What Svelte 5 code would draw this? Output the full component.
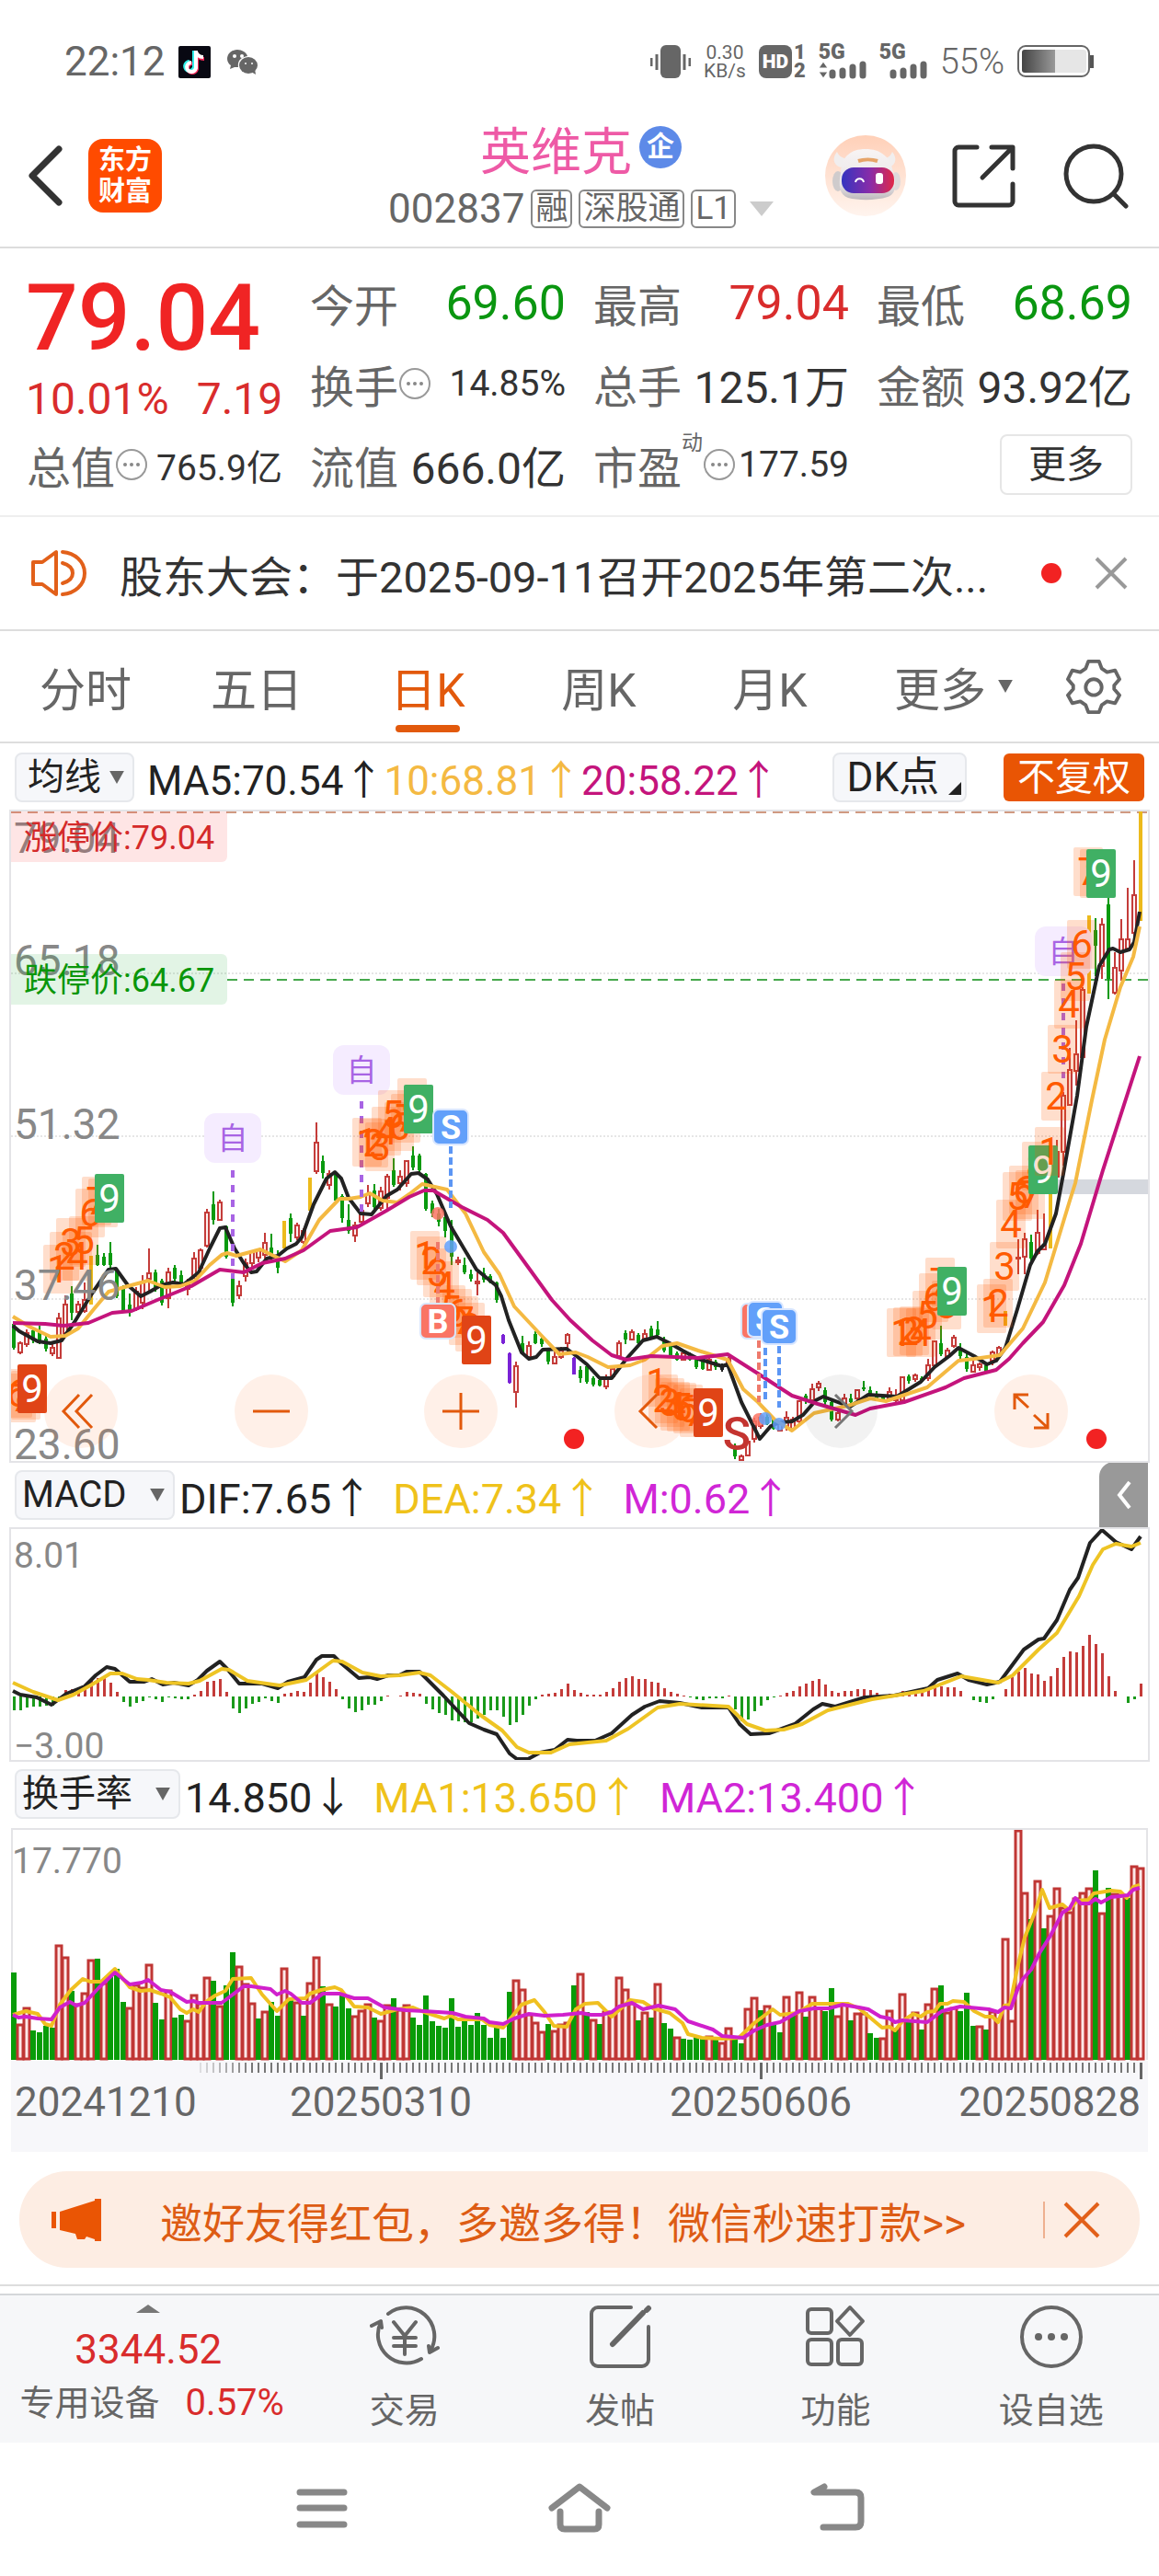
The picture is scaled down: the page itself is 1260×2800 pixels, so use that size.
<script lang="ts">
  type Bar = { kind: string; values: number[]; x: number };

  const WIDTH = 1236;

  const scale = (from: number, to: number, size: number) => (v: number) =>
    Math.round(((v - from) / (to - from)) * size);

  const chartX = scale(30, 3058, WIDTH);
  const priceY = scale(45, 1540, 706);
  const macdX = scale(15, 1553, WIDTH);
  const macdY = scale(212, 966, 251);
  const turnoverY = scale(228, 980, 250);

  const barX = (i: number) => 3 + i * 7;

  function points(data: string, x: (v: number) => number, y: (v: number) => number) {
    return data
      .trim()
      .split(/\s+/)
      .map((pair) => {
        const [a, b] = pair.split(",").map(Number);
        return `${x(a)},${y(b)}`;
      })
      .join(" ");
  }

  function bars(data: string): Bar[] {
    return data
      .trim()
      .split(/\s*;\s*/)
      .map((row, i) => {
        const [kind, ...values] = row.split(" ");
        return { kind, values: values.map(Number), x: barX(i) };
      })
      .filter((bar) => bar.kind !== "-");
  }

  // kind, high, body top, body bottom, low
  const candles = bars(`
    g 1225 1225 1280 1284; r 1265 1270 1290 1295; r 1238 1245 1272 1278; g 1232 1240 1262 1270;
    g 1228 1242 1265 1272; g 1245 1258 1282 1288; r 1270 1280 1292 1298; r 1200 1212 1302 1302;
    r 1158 1180 1245 1250; g 1138 1155 1200 1215; r 1172 1180 1198 1205; r 1130 1170 1195 1200;
    y 1068 1068 1180 1180; g 1043 1065 1090 1092; g 1062 1070 1090 1092; g 1035 1062 1090 1095;
    g 1100 1100 1160 1165; g 1135 1145 1195 1198; g 1155 1180 1200 1207; r 1140 1150 1190 1195;
    r 1112 1130 1175 1190; r 1050 1108 1120 1150; g 1100 1105 1140 1150; g 1120 1125 1175 1182;
    r 1095 1105 1165 1188; g 1090 1095 1120 1130; g 1102 1112 1130 1135; r 1120 1135 1145 1158;
    r 1060 1075 1115 1120; r 1050 1055 1095 1105; r 960 968 1045 1048; g 920 950 985 995;
    r 938 945 985 985; g 998 1000 1070 1075; g 1110 1120 1175 1184; r 1125 1138 1158 1168;
    r 1075 1085 1115 1128; r 1055 1060 1085 1095; r 1050 1055 1072 1082; r 1015 1038 1065 1075;
    g 1018 1048 1075 1080; g 1055 1070 1095 1108; y 988 988 1050 1050; g 970 980 1018 1035;
    r 992 998 1025 1032; r 1005 1010 1035 1040; y 888 888 965 965; r 760 808 872 880;
    g 838 850 878 890; r 870 880 905 915; g 878 880 940 945; g 925 930 980 992;
    g 950 985 1010 1018; r 990 998 1022 1035; r 955 965 990 1000; r 905 925 948 955;
    g 902 918 955 965; r 910 920 958 965; r 880 885 935 960; g 843 870 905 910;
    r 870 885 900 918; r 848 850 900 910; g 815 838 865 870; g 832 838 870 880;
    g 878 880 960 965; g 940 948 970 978; g 960 970 990 1000; g 970 978 1010 1025;
    g 985 1000 1070 1088; r 1070 1078 1082 1088; g 1073 1088 1105 1110; g 1100 1110 1120 1128;
    r 1105 1128 1132 1158; g 1095 1108 1122 1130; g 1110 1115 1130 1132; g 1128 1130 1170 1175;
    p 1248 1250 1270 1272; p 1290 1293 1360 1362; r 1312 1322 1382 1418; g 1252 1268 1290 1295;
    r 1265 1275 1300 1305; g 1242 1248 1270 1272; g 1255 1258 1272 1278; g 1280 1285 1312 1318;
    r 1285 1300 1315 1318; r 1278 1285 1300 1305; r 1245 1250 1270 1290; p 1300 1303 1340 1342;
    g 1322 1330 1350 1360; g 1318 1322 1358 1362; g 1345 1350 1365 1368; g 1350 1353 1366 1368;
    r 1340 1348 1368 1375; r 1320 1328 1345 1350; r 1262 1270 1298 1305; g 1240 1245 1260 1272;
    r 1238 1243 1260 1262; g 1245 1250 1270 1272; r 1238 1248 1258 1265; g 1228 1235 1255 1260;
    g 1218 1238 1250 1255; g 1255 1260 1285 1290; g 1270 1272 1300 1302; g 1288 1293 1308 1310;
    r 1288 1293 1308 1310; g 1290 1295 1308 1310; g 1300 1305 1325 1328; g 1305 1310 1328 1330;
    r 1300 1308 1330 1330; g 1308 1312 1325 1330; k 1315 1320 1330 1335; r 1300 1305 1318 1325;
    g 1500 1510 1530 1535; r 1525 1530 1538 1540; r 1490 1495 1528 1530; r 1440 1450 1490 1498;
    r 1430 1440 1460 1465; g 1430 1438 1455 1458; g 1440 1445 1465 1468; r 1450 1455 1470 1472;
    r 1425 1440 1460 1470; r 1438 1445 1465 1470; r 1400 1402 1450 1455; g 1385 1390 1402 1408;
    r 1362 1375 1400 1405; r 1355 1362 1370 1380; g 1370 1378 1405 1412; g 1395 1405 1445 1448;
    r 1420 1430 1445 1448; r 1385 1395 1415 1418; g 1385 1395 1405 1410; r 1375 1378 1395 1400;
    g 1355 1370 1375 1380; g 1368 1378 1390 1392; g 1380 1385 1395 1398; g 1388 1392 1402 1404;
    r 1370 1382 1398 1400; r 1375 1390 1400 1408; r 1345 1348 1400 1408; g 1342 1345 1355 1362;
    r 1338 1343 1352 1358; g 1345 1350 1358 1360; r 1305 1320 1350 1355; r 1262 1265 1320 1325;
    g 1228 1270 1295 1298; r 1280 1285 1298 1300; r 1250 1257 1275 1280; g 1270 1280 1298 1305;
    g 1290 1300 1328 1335; r 1310 1320 1335 1337; r 1313 1318 1325 1332; g 1315 1320 1335 1336;
    r 1285 1290 1310 1320; r 1275 1280 1295 1305; y 1195 1195 1228 1228; - ;
    r 1030 1072 1075 1110; r 1015 1030 1070 1110; g 1020 1035 1075 1085; r 962 1015 1062 1066;
    r 970 1045 1053 1056; y 925 925 1050 1050; r 800 828 885 888; r 690 700 828 860;
    r 590 640 720 722; r 525 605 642 675; r 450 455 610 615; y 285 285 465 465;
    g 290 318 355 425; r 290 305 400 430; g 245 258 430 478; r 370 405 463 466;
    r 293 340 412 435; r 220 340 360 365; r 158 238 325 350; y 45 45 298 298
  `);

  const ma5 = points(
    `36,1228 53,1242 75,1252 100,1265 135,1270 165,1262 200,1220 245,1155 290,1100 310,1097
    340,1135 375,1162 400,1150 430,1135 460,1129 490,1133 530,1105 560,1050 585,1005 600,1003
    625,1050 650,1085 670,1105 685,1103 710,1075 740,1068 765,1050 790,1040 805,1025 835,950
    870,890 893,876 910,890 930,935 960,970 990,972 1030,930 1060,915 1095,880 1115,877
    1140,892 1165,925 1202,1000 1270,1100 1320,1135 1335,1160 1355,1215 1390,1290 1410,1305
    1430,1300 1445,1284 1510,1282 1539,1300 1564,1318 1599,1350 1629,1350 1669,1305 1714,1262
    1749,1255 1789,1272 1819,1285 1859,1305 1924,1322 1939,1318 1974,1405 2024,1490 2054,1460
    2079,1452 2109,1450 2139,1435 2174,1400 2194,1391 2264,1415 2314,1388 2389,1391 2454,1357
    2489,1325 2529,1298 2554,1280 2594,1298 2629,1317 2654,1310 2679,1280 2709,1190 2744,1090
    2764,1058 2784,1040 2814,970 2832,880 2869,700 2894,540 2929,400 2954,362 2964,360
    2984,368 3009,362 3021,345 3036,275`,
    chartX,
    priceY,
  );

  const ma10 = points(
    `36,1208 80,1230 135,1255 175,1252 210,1235 250,1190 290,1150 340,1138 395,1125 440,1140
    480,1138 520,1125 560,1090 590,1065 605,1062 630,1068 695,1053 760,1080 805,1055 850,985
    905,937 930,937 960,932 985,923 1020,940 1060,945 1090,925 1125,902 1190,915 1240,970
    1290,1060 1330,1110 1370,1185 1440,1250 1490,1295 1535,1290 1565,1300 1619,1325 1679,1320
    1719,1308 1764,1275 1804,1268 1859,1285 1939,1308 1979,1375 2019,1405 2064,1445 2109,1470
    2169,1430 2259,1412 2319,1395 2359,1402 2469,1370 2554,1310 2594,1305 2664,1297 2724,1235
    2784,1130 2849,940 2864,900 2909,710 2944,570 2984,450 3019,380 3036,310`,
    chartX,
    priceY,
  );

  const ma20 = points(
    `36,1222 120,1225 170,1228 235,1222 300,1200 350,1195 420,1170 510,1138 585,1100 650,1105
    700,1085 760,1075 810,1055 880,1010 950,1003 1030,965 1090,932 1130,917 1155,917 1230,955
    1300,985 1340,1015 1400,1085 1470,1170 1520,1217 1579,1262 1629,1297 1669,1308 1734,1298
    1859,1302 1939,1295 2019,1338 2109,1390 2179,1408 2279,1435 2319,1420 2409,1405 2519,1370
    2569,1350 2654,1330 2689,1305 2724,1270 2779,1220 2834,1135 2879,1040 2939,870 3036,608`,
    chartX,
    priceY,
  );

  // nine-count marks: digit, x, y; a nine closes a run
  const marks = `
    6,46,1383 7,57,1394 8,70,1388 9b,86,1372
    1,155,1098 2,172,1068 3,189,1035 4,206,1068 5,223,1032 6,240,968 7,257,940 8,274,945 9s,291,935
    1,978,806 2,995,808 3,1013,815 4,1030,780 5,1047,742 6,1064,770 7,1081,750 8,1098,714 9s,1115,730
    1,1132,1065 2,1150,1078 3,1167,1105 4,1184,1135 5,1202,1190 6,1219,1200 7,1236,1215 8,1253,1230 9b,1269,1260
    1,1749,1358 2,1766,1395 3,1783,1405 4,1800,1412 5,1817,1415 6,1834,1420 7,1851,1428 9b,1886,1428
    1,2401,1243 2,2418,1242 3,2435,1240 4,2452,1243 5,2469,1203 6,2486,1163 7,2504,1127 8,2521,1180 9s,2537,1149
    1,2641,1188 2,2658,1175 3,2675,1091 4,2692,993 5,2709,931 6,2727,915 7,2744,925 8,2761,860 9s,2778,869
    1,2795,826 2,2812,700 3,2830,591 4,2847,488 5,2864,425 6,2881,349 7,2898,182 8,2915,186 9s,2933,187`
    .trim()
    .split(/\s+/)
    .map((mark) => {
      const [text, x, y] = mark.split(",");
      return {
        digit: text[0],
        kind: text[1] === "b" ? "buy" : text[1] === "s" ? "sell" : "count",
        x: chartX(Number(x)),
        y: priceY(Number(y)),
      };
    });

  const watches = [
    { x: 621, y: 797, from: 870, to: 1120 },
    { x: 963, y: 640, from: 713, to: 968 },
    { x: 2832, y: 366, from: 440, to: 660 },
  ];

  const trades = [
    { side: "S", x: 1200, y: 771, from: 815, to: 958, dot: 1047 },
    { side: "B", x: 1166, y: 1218, from: 1035, to: 1180, dot: 970 },
    { side: "B", x: 2022, y: 1218, from: 1262, to: 1405, dot: 1445 },
    { side: "S", x: 2040, y: 1213, from: 1280, to: 1400, dot: 1442 },
    { side: "S", x: 2075, y: 1231, from: 1275, to: 1418, dot: 1455 },
  ];

  const priceLabels = [
    { text: "79.04", y: 45 },
    { text: "65.18", y: 178 },
    { text: "51.32", y: 356 },
    { text: "37.46", y: 531 },
    { text: "23.60", y: 704 },
  ];

  const macdBars = `803 803 795 792 792 788 788 765 738 735 738 728 699 700 700 714 743 776 792 780 773
    762 768 776 762 766 768 768 753 741 711 709 702 743 797 812 797 783 776 764 774 780 750 746 741
    743 713 682 696 710 735 768 797 810 804 786 786 774 757 759 755 743 747 751 783 800 812 819 837
    840 843 843 830 819 804 804 825 851 843 819 789 768 753 750 747 735 717 738 747 753 753 753 744
    732 711 699 693 702 702 711 714 732 744 750 756 762 768 770 766 766 766 756 800 840 833 807 788
    771 762 756 747 741 726 717 708 702 720 741 747 741 741 735 735 738 747 752 750 752 741 741 743
    735 733 720 725 729 729 741 760 770 776 780 767 760 735 696 678 666 684 687 708 693 666 630 612
    615 594 558 588 618 693 741 759 780 767 717`
    .split(/\s+/)
    .map(Number);

  const zero = macdY(759);

  const dif = points(
    `18,740 28,752 50,762 70,785 90,750 115,725 130,690 145,664 155,668 175,710 195,711 205,703
    220,720 235,713 255,722 268,705 280,675 297,645 307,670 323,718 355,718 376,732 390,710
    412,697 428,640 436,626 452,626 462,650 485,698 500,697 510,702 525,690 540,690 550,677
    568,677 600,755 635,845 655,868 672,882 690,945 700,963 714,963 730,942 750,932 768,900
    780,903 805,903 828,880 855,818 872,792 892,775 920,779 950,795 985,795 1000,850 1015,883
    1040,878 1075,850 1100,800 1112,782 1130,793 1170,762 1210,757 1255,733 1268,705 1295,685
    1310,705 1335,720 1353,712 1385,605 1405,572 1413,568 1430,510 1447,410 1458,370 1474,258
    1491,215 1510,255 1530,278 1543,237`,
    macdX,
    macdY,
  );

  const dea = points(
    `18,714 45,745 78,770 100,752 125,720 150,683 165,685 185,703 200,705 225,713 255,716 270,708
    300,668 310,672 335,707 378,722 415,705 450,643 463,645 490,680 515,693 540,690 568,682
    582,690 610,740 650,820 680,870 700,925 715,943 745,942 770,915 820,903 850,865 890,795
    920,782 985,793 1010,850 1035,870 1060,868 1085,850 1120,803 1180,767 1250,740 1300,693
    1350,715 1370,690 1405,605 1430,550 1460,430 1478,330 1492,278 1510,260 1530,268 1543,258`,
    macdX,
    macdY,
  );

  const turnover = bars(`
    g 693;r 862;r 808;g 885;g 890;g 868;g 876;r 603;r 643;g 755;r 797;r 760;r 652;g 648;r 728;g 700;
    g 682;g 790;r 808;r 732;r 742;r 667;g 795;g 848;r 752;g 843;g 833;r 850;r 767;r 795;r 710;g 720;
    r 803;g 735;g 627;r 673;r 730;r 795;g 846;r 822;g 790;g 837;r 680;g 785;r 790;g 837;r 728;r 643;
    g 738;r 797;g 805;g 770;g 812;r 835;r 817;r 797;g 843;r 852;r 800;g 778;r 815;r 800;g 843;g 867;
    g 768;g 855;g 870;g 876;g 777;g 873;g 852;g 867;g 828;g 865;g 909;g 876;g 909;g 756;r 718;r 748;
    r 830;r 857;r 887;g 864;r 885;r 863;r 857;g 735;r 697;g 825;r 848;g 862;r 820;r 825;r 710;r 748;
    r 795;g 850;r 823;g 843;r 730;g 861;g 879;r 905;g 912;g 915;g 905;g 909;r 902;g 912;r 922;r 875;
    g 909;g 927;r 812;r 775;g 819;r 802;g 865;g 891;r 772;g 832;r 758;g 840;r 772;r 808;g 822;g 744;
    r 835;r 795;g 850;r 827;r 827;g 894;g 909;r 908;r 818;g 880;r 764;g 850;r 823;g 882;r 797;r 745;
    g 735;r 825;r 808;g 822;g 759;g 870;r 868;g 880;r 820;r 845;r 583;r 850;r 228;r 433;g 520;r 394;
    g 549;r 508;r 419;r 480;r 495;r 450;r 433;r 419;g 360;r 500;g 417;r 435;r 440;g 450;r 346;r 352
  `);

  const turnoverMa1 = points(
    `36,832 70,820 100,830 120,862 138,868 160,800 190,750 222,716 240,725 270,725 308,683
    345,742 375,755 400,752 430,762 455,775 480,815 498,828 515,815 530,823 550,790 575,768
    600,755 620,715 670,713 700,765 738,820 770,780 815,778 825,762 855,750 893,743 910,752
    945,805 980,808 1015,830 1060,815 1100,808 1130,825 1185,845 1200,835 1220,848 1285,848
    1305,865 1340,875 1390,800 1423,785 1450,825 1475,868 1510,873 1535,815 1559,797 1594,794
    1629,840 1679,785 1714,790 1739,813 1784,827 1819,860 1834,897 1869,908 1924,912 1969,908
    2009,860 2059,815 2079,832 2124,828 2164,797 2259,797 2289,812 2349,875 2369,873 2384,885
    2404,855 2434,830 2454,840 2469,823 2489,820 2504,798 2524,797 2539,786 2569,790 2594,820
    2624,838 2644,840 2659,857 2676,803 2691,800 2709,680 2729,580 2759,490 2777,425 2796,483
    2829,472 2847,490 2869,460 2899,457 2914,437 2959,428 2984,430 3002,452 3019,415 3036,407`,
    chartX,
    turnoverY,
  );

  const turnoverMa2 = points(
    `36,833 50,842 70,838 100,845 138,848 160,810 187,790 205,802 225,793 265,742 308,695
    345,733 378,728 396,718 430,752 455,757 498,790 515,787 530,795 590,793 650,740 670,738
    720,748 738,767 760,755 775,763 805,792 825,792 860,762 905,762 945,778 980,777 1025,808
    1080,817 1130,820 1205,827 1240,838 1290,845 1305,858 1340,862 1370,845 1410,830 1450,836
    1500,832 1549,828 1574,833 1604,833 1629,823 1649,805 1684,792 1714,816 1754,802 1799,815
    1834,855 1899,880 1924,903 1979,908 2009,883 2044,865 2079,858 2099,842 2129,820 2169,813
    2209,812 2244,800 2289,808 2314,815 2344,840 2369,845 2384,857 2404,850 2469,857 2509,820
    2559,807 2634,815 2659,823 2676,810 2694,812 2709,750 2724,715 2747,685 2769,630 2799,575
    2829,500 2849,485 2864,452 2879,470 2902,470 2919,455 2934,465 2959,448 2984,445 3004,443
    3019,425 3036,418`,
    chartX,
    turnoverY,
  );

  const months = [57, 116, 175];
  const ticks = Array.from({ length: 147 }, (_, i) => i + 29);

  const periods = ["分时", "五日", "日K", "周K", "月K"];
  let period = $state("日K");
  let showNotice = $state(true);
  let showPromo = $state(true);
</script>

{#snippet dots()}
  <svg class="dots" viewBox="0 0 36 36" aria-hidden="true">
    <circle cx="18" cy="18" r="16" fill="none" stroke="#999" stroke-width="2" />
    <circle cx="11" cy="18" r="2" fill="#888" />
    <circle cx="18" cy="18" r="2" fill="#888" />
    <circle cx="25" cy="18" r="2" fill="#888" />
  </svg>
{/snippet}

{#snippet caret()}
  <svg class="caret" viewBox="0 0 18 16" aria-hidden="true"><path d="M0 0h18l-9 16z" fill="#666" /></svg>
{/snippet}

{#snippet signal(active: boolean)}
  <svg width="52" height="20" viewBox="0 0 52 20">
    <path d="M15 13v3M26 11v5M37 7v9M48 4v12" stroke="#666" stroke-width="7" stroke-linecap="round" />
    {#if active}
      <path d="M0 8l5-7 5 7zM0 12h10l-5 7z" fill="#666" stroke="#fff" stroke-width="1" />
    {/if}
  </svg>
{/snippet}

<div class="app">
  <div class="status">
    <span class="time">22:12</span>
    <svg width="35" height="35" viewBox="0 0 35 35">
      <rect width="35" height="35" rx="2" fill="#080812" />
      <g fill="none" stroke-width="4">
        <path d="M17 5v18a5 5 0 1 1-5-6M17 6c1 4 4 6 8 6" stroke="#2ff0ea" />
        <path d="M20 7v18a5 5 0 1 1-5-6M20 8c1 4 4 6 8 6" stroke="#f8285a" />
        <path d="M19 5v19a5 5 0 1 1-5-6M19 6c1 4 4 6 8 6" stroke="#fff" />
      </g>
    </svg>
    <svg width="34" height="30" viewBox="0 0 34 30">
      <path d="M11 2C5 2 0 6 0 12c0 3 2 6 4 7l-1 4 5-2h4c-1-7 3-11 10-12C21 5 16 2 11 2z" fill="#666" />
      <ellipse cx="23" cy="19" rx="10" ry="9" fill="#666" />
      <path d="M26 26l5 3-1-6z" fill="#666" />
      <g fill="#fff">
        <circle cx="8" cy="9" r="2" /><circle cx="16" cy="9" r="2" />
        <circle cx="20" cy="17" r="1" /><circle cx="27" cy="17" r="1" />
      </g>
    </svg>
    <span class="spacer"></span>
    <svg width="44" height="36" viewBox="0 0 44 36">
      <rect x="11" width="22" height="36" rx="6" fill="#666" />
      <path d="M7 10v17M1 14v9M37 10v17M43 14v9" stroke="#666" stroke-width="3" />
    </svg>
    <span class="speed">0.30<br />KB/s</span>
    <span class="hd">HD</span>
    <span class="sims">1<br />2</span>
    <span class="net">5G{@render signal(true)}</span>
    <span class="net">5G{@render signal(false)}</span>
    <span class="percent">55%</span>
    <svg width="84" height="36" viewBox="0 0 84 36">
      <defs>
        <linearGradient id="charge"><stop stop-color="#444" /><stop offset="1" stop-color="#999" /></linearGradient>
      </defs>
      <rect x="1" y="1" width="77" height="33" rx="8" fill="#fff" stroke="#666" stroke-width="2" />
      <rect x="5" y="5" width="70" height="25" rx="3" fill="#e6e6e6" />
      <path d="M8 5h33v25H8a3 3 0 0 1-3-3V8a3 3 0 0 1 3-3z" fill="url(#charge)" />
      <rect x="79" y="11" width="4" height="14" fill="#555" />
    </svg>
  </div>

  <header>
    <button aria-label="返回">
      <svg width="38" height="66" viewBox="0 0 38 66"><path d="M34 4L5 33l29 29" class="ink" /></svg>
    </button>
    <a class="logo" href="#home"><span>东方</span><span>财富</span></a>
    <div class="stock">
      <h1>英维克 <span class="firm">企</span></h1>
      <div class="code">
        002837 <span class="tag">融</span><span class="tag">深股通</span><span class="tag">L1</span>
        <svg width="26" height="16" viewBox="0 0 26 16"><path d="M0 0h26L13 16z" fill="#ccc" /></svg>
      </div>
    </div>
    <div class="actions">
      <button aria-label="助手">
        <svg width="88" height="88" viewBox="0 0 88 88">
          <defs>
            <linearGradient id="halo" x2="0" y2="1"><stop stop-color="#ffd0b8" /><stop offset="1" stop-color="#fff4ee" /></linearGradient>
            <linearGradient id="visor"><stop stop-color="#3434c0" /><stop offset=".55" stop-color="#8a2ca8" /><stop offset="1" stop-color="#e02848" /></linearGradient>
            <linearGradient id="helmet" x2="0" y2="1"><stop stop-color="#f8f4f4" /><stop offset=".7" stop-color="#e8e4e6" /><stop offset="1" stop-color="#bdb8bc" /></linearGradient>
          </defs>
          <circle cx="44" cy="44" r="44" fill="url(#halo)" />
          <path d="M17 35C8 32 8 24 13 18c2 5 6 7 12 8zM69 35c9-3 9-11 4-17-2 5-5 7-11 8z" fill="#f1eeee" />
          <ellipse cx="14" cy="50" rx="6" ry="11" fill="#cfcbcc" />
          <ellipse cx="77" cy="50" rx="5" ry="10" fill="#dedadb" />
          <path d="M17 40c1-17 11-25 27-25s27 8 30 25c4 18 2 24-6 27-12 4-32 4-43 1-9-3-11-12-8-28z" fill="url(#helmet)" />
          <rect x="18" y="35" width="57" height="28" rx="13" fill="url(#visor)" />
          <path d="M33 51c1-5 8-5 9 0" fill="none" stroke="#fff" stroke-width="2" />
          <rect x="55" y="41" width="8" height="12" rx="3" fill="#fff" />
          <path d="M36 28c6-2 15-2 21 0" stroke="#e6a469" stroke-width="4" fill="none" />
        </svg>
      </button>
      <button aria-label="分享">
        <svg width="70" height="70" viewBox="0 0 70 70">
          <g class="ink thin">
            <path d="M27 4H7a4 4 0 0 0-4 4v55a4 4 0 0 0 4 4h55a4 4 0 0 0 4-4V44M43 4h23v23M65 5L33 37" />
          </g>
        </svg>
      </button>
      <button aria-label="搜索">
        <svg width="72" height="72" viewBox="0 0 72 72">
          <g class="ink thin"><circle cx="34" cy="34" r="30" /><path d="M56 56l13 13" /></g>
        </svg>
      </button>
    </div>
  </header>

  <section class="quote">
    <div class="last">
      <strong>79.04</strong>
      <div class="change"><span>10.01%</span><span>7.19</span></div>
    </div>
    <dl>
      <div><dt>今开</dt><dd class="down">69.60</dd></div>
      <div><dt>最高</dt><dd class="up">79.04</dd></div>
      <div><dt>最低</dt><dd class="down">68.69</dd></div>
      <div><dt>换手{@render dots()}</dt><dd class="small">14.85%</dd></div>
      <div><dt>总手</dt><dd>125.1万</dd></div>
      <div><dt>金额</dt><dd>93.92亿</dd></div>
      <div><dt>总值{@render dots()}</dt><dd class="small">765.9亿</dd></div>
      <div><dt>流值</dt><dd>666.0亿</dd></div>
      <div><dt>市盈<sup>动</sup>{@render dots()}</dt><dd class="small">177.59</dd></div>
      <div class="more"><button>更多</button></div>
    </dl>
  </section>

  {#if showNotice}
    <section class="notice">
      <svg width="60" height="52" viewBox="0 0 60 52" fill="none" stroke="#e2601a" stroke-width="4" stroke-linejoin="round">
        <path d="M2 14h10L27 3v46L12 38H2z" />
        <path d="M34 3c13 1 24 10 24 23S47 48 34 49M34 15c7 2 11 6 11 11s-4 9-11 11" stroke-linecap="round" />
      </svg>
      <a href="#notice">股东大会：于2025-09-11召开2025年第二次...</a>
      <i class="unread"></i>
      <button aria-label="关闭" onclick={() => (showNotice = false)}>
        <svg width="36" height="36" viewBox="0 0 36 36"><path d="M2 2l32 32M34 2L2 34" stroke="#999" stroke-width="4" /></svg>
      </button>
    </section>
  {/if}

  <nav class="periods">
    {#each periods as name (name)}
      <button class:active={period === name} onclick={() => (period = name)}>{name}</button>
    {/each}
    <button class="wide">更多{@render caret()}</button>
    <button class="gear" aria-label="设置">
      <svg width="60" height="60" viewBox="0 0 62 62" fill="none" stroke="#666" stroke-width="4" stroke-linejoin="round">
        <path d="M25 3h12l3 8 6 4 9-2 5 10-6 7v4l6 7-5 9-9-2-6 4-3 8H25l-3-8-6-4-9 2-5-9 6-7v-4l-6-7 5-10 9 2 6-4z" />
        <circle cx="31" cy="32" r="9" />
      </svg>
    </button>
  </nav>

  <div class="legend">
    <label class="pick">
      <select aria-label="主图指标"><option>均线</option></select>{@render caret()}
    </label>
    <div class="values tight">
      <span>MA5:70.54↑</span>
      <span class="amber">10:68.81↑</span>
      <span class="plum">20:58.22↑</span>
    </div>
    <button class="dk">DK点<i></i></button>
    <button class="adjust">不复权</button>
  </div>

  <div class="panel">
    <svg viewBox="0 0 1236 706" role="img" aria-label="日K线">
      {#each [176, 353, 530] as y (y)}
        <path d="M0 {y}h1236" stroke="#ccc" stroke-dasharray="2 2" />
      {/each}
      <path d="M0 1h1236" stroke="#d09a82" stroke-width="2" stroke-dasharray="11 7" />
      <path d="M235 183h1001" stroke="#46a84c" stroke-width="2" stroke-dasharray="11 7" />
      <rect x="1138" y="400" width="98" height="16" fill="#d5d8de" />

      {#each candles as { kind, values: [high, top, bottom, low], x } (x)}
        {#if kind === "r"}
          <path d="M{x} {priceY(high)}V{priceY(top)}M{x} {priceY(bottom)}V{priceY(low)}" stroke="#c43c3a" stroke-width="2" />
          <rect x={x - 2} y={priceY(top)} width="4" height={priceY(bottom) - priceY(top)} fill="#fdf0f0" stroke="#c43c3a" stroke-width="2" />
        {:else}
          <g class={kind}>
            <rect x={x - 1} y={priceY(high)} width="2" height={priceY(low) - priceY(high)} />
            <rect x={x - 2} y={priceY(top)} width="4" height={priceY(bottom) - priceY(top)} />
          </g>
        {/if}
      {/each}

      <g class="line">
        <polyline points={ma5} stroke="#222" />
        <polyline points={ma10} stroke="#f4b942" />
        <polyline points={ma20} stroke="#c4147c" />
      </g>

      {#each watches as watch (watch.x)}
        <path
          d="M{chartX(watch.x)} {priceY(watch.from)}V{priceY(watch.to)}"
          stroke="#a864e4"
          stroke-width="4"
          stroke-dasharray="8 8"
        />
        <rect x={chartX(watch.x) - 31} y={priceY(watch.y) - 27} width="62" height="54" rx="12" fill="#f5ecff" />
        <text class="watch" x={chartX(watch.x)} y={priceY(watch.y) + 12}>自</text>
      {/each}

      {#each marks as mark, i (i)}
        <g class={mark.kind}>
          <rect x={mark.x - 16} y={mark.y - 26} width="32" height="53" rx="2" />
          <text class="digit" x={mark.x} y={mark.y + 15}>{mark.digit}</text>
        </g>
      {/each}

      {#each trades as trade (trade.x)}
        <g class="trade {trade.side}">
          <path d="M{chartX(trade.x)} {priceY(trade.from)}V{priceY(trade.to)}" />
          <circle cx={chartX(trade.x)} cy={priceY(trade.dot)} r="7" />
          <rect x={chartX(trade.x) - 19} y={priceY(trade.y) - 19} width="38" height="38" rx="6" />
          <text x={chartX(trade.x)} y={priceY(trade.y) + 13}>{trade.side}</text>
        </g>
      {/each}
      <text class="signal" x="789" y="694">S</text>

      <g class="axis">
        {#each priceLabels as label (label.text)}
          <text x="3" y={label.y}>{label.text}</text>
        {/each}
      </g>

      <path d="M0 0h235v49a6 6 0 0 1-6 6H0z" fill="#f43838" fill-opacity=".13" />
      <text class="limit" x="14" y="41" fill="#d42a2a">涨停价:79.04</text>
      <path d="M0 155h229a6 6 0 0 1 6 6v43a6 6 0 0 1-6 6H0z" fill="#1ca838" fill-opacity=".13" />
      <text class="limit" x="14" y="196" fill="#0a960a">跌停价:64.67</text>
    </svg>

    <div class="tools">
      <button aria-label="最左"><svg viewBox="0 0 80 80"><path d="M38 22L21 40l17 18M52 22L35 40l17 18" /></svg></button>
      <button aria-label="缩小"><svg viewBox="0 0 80 80"><path d="M20 40h40" /></svg></button>
      <button aria-label="放大"><svg viewBox="0 0 80 80"><path d="M20 40h40M40 20v40" /></svg></button>
      <button aria-label="向左"><svg viewBox="0 0 80 80"><path d="M46 22L28 40l18 18" /></svg></button>
      <button aria-label="向右" class="off"><svg viewBox="0 0 80 80"><path d="M34 22l18 18-18 18" /></svg></button>
      <button aria-label="全屏">
        <svg viewBox="0 0 80 80"><path d="M22 38V22h15M23 23l14 13M58 42v16H43M57 57L43 44" /></svg>
      </button>
    </div>
    <i class="unread mid"></i>
    <i class="unread end"></i>
  </div>

  <div class="legend">
    <label class="pick">
      <select aria-label="副图指标一" class="roomy"><option>MACD</option></select>{@render caret()}
    </label>
    <div class="values">
      <span>DIF:7.65↑</span>
      <span class="gold">DEA:7.34↑</span>
      <span class="violet">M:0.62↑</span>
    </div>
    <button class="drawer" aria-label="展开">
      <svg width="18" height="34" viewBox="0 0 18 34"><path d="M15 3L4 17l11 14" fill="none" stroke="#fff" stroke-width="4" /></svg>
    </button>
  </div>

  <div class="panel">
    <svg viewBox="0 0 1236 251" role="img" aria-label="MACD">
      {#each macdBars as value, i (i)}
        <rect
          x={barX(i) - 1}
          y={Math.min(zero, macdY(value))}
          width="3"
          height={Math.abs(macdY(value) - zero)}
          fill={value < 759 ? "#c43c3a" : "#1a9a1a"}
        />
      {/each}
      <g class="line">
        <polyline points={dif} stroke="#222" />
        <polyline points={dea} stroke="#eec424" />
      </g>
      <g class="axis minor">
        <text x="3" y="42">8.01</text>
        <text x="3" y="249">−3.00</text>
      </g>
    </svg>
  </div>

  <div class="legend">
    <label class="pick">
      <select aria-label="副图指标二" class="roomy"><option>换手率</option></select>{@render caret()}
    </label>
    <div class="values">
      <span>14.850↓</span>
      <span class="gold">MA1:13.650↑</span>
      <span class="violet">MA2:13.400↑</span>
    </div>
  </div>

  <div class="panel flush">
    <svg viewBox="0 0 1236 350" role="img" aria-label="换手率">
      <path d="M1 0v250M1235 0v250" stroke="#e4e4e7" stroke-width="2" />
      <rect y="251" width="1236" height="99" fill="#f7f7fa" />
      {#each turnover as { kind, values: [value], x } (x)}
        {#if kind === "r"}
          <rect x={x - 3} y={turnoverY(value) + 1} width="6" height={248 - turnoverY(value)} fill="#fde8e8" stroke="#c03634" stroke-width="3" />
        {:else}
          <rect x={x - 3} y={turnoverY(value)} width="6" height={250 - turnoverY(value)} fill="#089c08" />
        {/if}
      {/each}
      <g class="line">
        <polyline points={turnoverMa1} stroke="#f0c020" />
        <polyline points={turnoverMa2} stroke="#d020cc" />
      </g>
      {#each ticks as i (i)}
        <rect x={barX(i) - 1} y="253" width="2" height="11" fill="#777" opacity={Math.min(1, (i - 27) / 10)} />
      {/each}
      {#each months as i (i)}
        <rect x={barX(i) - 1} y="253" width="3" height="18" fill="#666" />
      {/each}
      <g class="axis minor"><text x="1" y="47">17.770</text></g>
      <g class="dates">
        <text x="4" y="311">20241210</text>
        <text x="402" y="311" text-anchor="middle">20250310</text>
        <text x="815" y="311" text-anchor="middle">20250606</text>
        <text x="1228" y="311" text-anchor="end">20250828</text>
      </g>
    </svg>
  </div>

  {#if showPromo}
    <aside>
      <svg width="56" height="46" viewBox="0 0 56 46" fill="#ea5504">
        <path d="M0 14h5v18H0zM9 14L47 2V0h7v46h-7v-2l-9-3-2 3h-8l-2-6-17-4z" />
      </svg>
      <a href="#invite">邀好友得红包，多邀多得！微信秒速打款&gt;&gt;</a>
      <button aria-label="关闭" onclick={() => (showPromo = false)}>
        <svg width="40" height="40" viewBox="0 0 40 40"><path d="M2 2l36 36M38 2L2 38" stroke="#e2601a" stroke-width="4" /></svg>
      </button>
    </aside>
  {/if}

  <div class="dock">
    <button class="index">
      <svg width="26" height="9" viewBox="0 0 26 9"><path d="M13 0l13 9H0z" fill="#777" /></svg>
      <span class="value">3344.52</span>
      <span class="sector">专用设备 <b>0.57%</b></span>
    </button>
    <button>
      <svg viewBox="0 0 76 70">
        <path d="M20 10a31 31 0 0 1 46 40M56 59A31 31 0 0 1 12 19" />
        <path d="M2 23l10-5 1 7M74 47l-9 5-1-7" />
        <path d="M26 19l12 15 12-15M26 36h24M26 45h24M38 34v20" />
      </svg>
      交易
    </button>
    <button>
      <svg viewBox="0 0 76 70">
        <path d="M50 3H14a7 7 0 0 0-7 7v50a7 7 0 0 0 7 7h48a7 7 0 0 0 7-7V24" />
        <path d="M30 43l33-34M67 6l2-2" stroke-width="6" />
      </svg>
      发帖
    </button>
    <button>
      <svg viewBox="0 0 76 70">
        <rect x="8" y="5" width="26" height="26" rx="4" />
        <rect x="8" y="38" width="26" height="27" rx="4" />
        <rect x="41" y="38" width="26" height="27" rx="4" />
        <path d="M54 3l14 15-14 15-14-15z" />
      </svg>
      功能
    </button>
    <button>
      <svg viewBox="0 0 76 70">
        <circle cx="38" cy="35" r="32" />
        <g fill="#666" stroke="none"><circle cx="24" cy="35" r="4" /><circle cx="38" cy="35" r="4" /><circle cx="52" cy="35" r="4" /></g>
      </svg>
      设自选
    </button>
  </div>

  <nav class="system">
    <button aria-label="菜单"><svg viewBox="0 0 70 54"><path d="M11 10h48M11 27h48M11 45h48" /></svg></button>
    <button aria-label="主页"><svg viewBox="0 0 70 54"><path d="M5 27L35 4l30 23M14 31v14q0 5 5 5h32q5 0 5-5V31" /></svg></button>
    <button aria-label="后退"><svg viewBox="0 0 70 54"><path d="M21 4L10 10h45q6 0 6 6v26q0 6-6 6H20" /></svg></button>
  </nav>
</div>

<style>
  :global(body) {
    background: #fff;
  }

  .app {
    font-family: Roboto, "Noto Sans CJK SC", sans-serif;
    font-size: 44px;
    color: #333;
  }

  .app :global(*) {
    box-sizing: border-box;
  }

  svg {
    flex: none;
  }

  button {
    border: 0;
    padding: 0;
    background: none;
    font: inherit;
    color: inherit;
    cursor: pointer;
  }

  button svg {
    display: block;
  }

  a {
    color: inherit;
    text-decoration: none;
  }

  .spacer {
    flex: 1;
  }

  .ink {
    fill: none;
    stroke: #333;
    stroke-width: 7;
    stroke-linecap: round;
    stroke-linejoin: round;
  }

  .thin {
    stroke-width: 5;
  }

  .status {
    display: flex;
    align-items: center;
    height: 134px;
    padding: 0 70px;
    color: #666;
  }

  .time {
    margin-right: 14px;
  }

  .status svg + svg {
    margin-left: 18px;
  }

  .speed {
    margin: 0 14px;
    width: 46px;
    text-align: center;
    font-size: 21px;
    line-height: 20px;
  }

  .hd {
    width: 36px;
    height: 36px;
    border-radius: 8px;
    background: #666;
    color: #fff;
    font-size: 21px;
    font-weight: 900;
    line-height: 36px;
    text-align: center;
  }

  .sims {
    margin: 0 14px 0 2px;
    font-size: 22px;
    font-weight: 900;
    line-height: 20px;
  }

  .net {
    display: flex;
    flex-direction: column;
    width: 52px;
    margin-right: 14px;
    font-size: 23px;
    font-weight: 900;
    line-height: 18px;
  }

  .percent {
    margin-right: 14px;
    font-size: 38px;
    font-weight: 300;
  }

  header {
    display: grid;
    grid-template-columns: auto auto 1fr auto;
    align-items: center;
    height: 136px;
    padding: 0 33px 20px 30px;
    border-bottom: 2px solid #ddd;
  }

  .logo {
    display: flex;
    flex-direction: column;
    justify-content: center;
    width: 80px;
    height: 80px;
    margin-left: 28px;
    border-radius: 16px;
    background: #ff4b00;
    color: #fff;
    font-size: 29px;
    font-weight: 700;
    line-height: 34px;
    text-align: center;
  }

  .stock {
    padding-left: 190px;
  }

  h1 {
    display: flex;
    align-items: center;
    justify-content: center;
    gap: 8px;
    margin: 0;
    height: 52px;
    font-size: 55px;
    font-weight: 400;
    color: #ee5aa6;
  }

  .firm {
    width: 46px;
    height: 46px;
    border-radius: 50%;
    background: #5d8ae8;
    color: #fff;
    font-size: 30px;
    font-weight: 700;
    line-height: 44px;
    text-align: center;
  }

  .code {
    display: flex;
    align-items: center;
    justify-content: center;
    gap: 7px;
    height: 42px;
    margin-top: 20px;
    color: #666;
  }

  .tag {
    height: 42px;
    padding: 0 3px;
    border: 2px solid #888;
    border-radius: 6px;
    font-size: 35px;
    line-height: 38px;
  }

  .code svg {
    margin-left: 8px;
  }

  .actions {
    display: flex;
    align-items: center;
    gap: 50px;
  }

  .quote {
    position: relative;
    padding: 15px 29px 0;
    height: 292px;
    border-bottom: 2px solid #eee;
  }

  dl {
    display: grid;
    grid-template-columns: repeat(4, 1fr);
    grid-template-rows: repeat(3, 88px);
    gap: 0 30px;
    margin: 0;
  }

  dl div {
    display: flex;
    align-items: center;
    justify-content: space-between;
    white-space: nowrap;
  }

  /* the last price takes the first column of the two upper rows */
  dl div:nth-child(1),
  dl div:nth-child(4) {
    grid-column: 2;
  }

  .last {
    position: absolute;
    top: 18px;
    left: 28px;
    color: #f02424;
  }

  .last strong {
    display: block;
    font-size: 100px;
    font-weight: 500;
    line-height: 116px;
  }

  .change {
    display: flex;
    gap: 30px;
    font-size: 48px;
    line-height: 60px;
    color: #d92c2c;
  }

  dt {
    display: flex;
    align-items: center;
    font-size: 48px;
    color: #666;
  }

  dd {
    margin: 0;
    font-size: 48px;
  }

  dd.small {
    font-size: 39px;
  }

  dd.up {
    font-size: 52px;
    color: #d92c2c;
  }

  dd.down {
    font-size: 52px;
    color: #0a9610;
  }

  sup {
    align-self: flex-start;
    font-size: 23px;
    line-height: 24px;
  }

  .dots {
    width: 36px;
    height: 36px;
  }

  dl .more {
    justify-content: flex-end;
  }

  .more button {
    width: 144px;
    height: 66px;
    border: 2px solid #e6e6e6;
    border-radius: 8px;
    font-size: 41px;
    line-height: 60px;
  }

  .notice {
    display: flex;
    align-items: center;
    height: 124px;
    padding: 0 34px;
    border-bottom: 2px solid #ddd;
    font-size: 47px;
    white-space: nowrap;
  }

  .notice a {
    flex: 1;
    margin-left: 36px;
    overflow: hidden;
  }

  .unread {
    width: 22px;
    height: 22px;
    border-radius: 50%;
    background: #f22222;
  }

  .notice button {
    margin-left: 36px;
  }

  .periods {
    display: flex;
    height: 122px;
    padding-right: 26px;
    border-bottom: 2px solid #ddd;
    font-size: 50px;
    color: #666;
  }

  .periods button {
    position: relative;
    display: flex;
    flex: 186 0 0;
    align-items: center;
    justify-content: center;
  }

  .periods .wide {
    flex-grow: 214;
    gap: 12px;
  }

  .periods .gear {
    flex-grow: 90;
  }

  .periods .active {
    color: #e2590c;
  }

  .periods .active::after {
    content: "";
    position: absolute;
    bottom: 10px;
    width: 70px;
    height: 8px;
    border-radius: 4px;
    background: #e2590c;
  }

  .caret {
    width: 18px;
    height: 14px;
  }

  .legend {
    display: flex;
    align-items: center;
    height: 74px;
    padding: 0 16px;
    color: #222;
    white-space: nowrap;
  }

  .pick {
    display: grid;
    align-items: center;
    margin-right: 5px;
  }

  .pick > :global(*) {
    grid-area: 1 / 1;
  }

  .pick .caret {
    justify-self: end;
    margin-right: 10px;
    pointer-events: none;
  }

  select {
    appearance: none;
    height: 54px;
    padding: 0 34px 0 12px;
    border: 2px solid #e6e8ec;
    border-radius: 8px;
    background: #f6f7fa;
    font: inherit;
    font-size: 40px;
    line-height: 48px;
    color: #222;
  }

  select.roomy {
    padding: 0 50px 0 6px;
  }

  .values {
    display: flex;
    flex: 1;
    gap: 22px;
    font-size: 45px;
  }

  .values.tight {
    gap: 0;
    margin-left: 9px;
    font-size: 44px;
  }

  .amber {
    color: #f4b942;
  }

  .plum {
    color: #c4147c;
  }

  .gold {
    color: #efc21a;
  }

  .violet {
    color: #d026d6;
  }

  .dk {
    display: flex;
    align-items: flex-end;
    height: 54px;
    padding: 0 4px 0 14px;
    border: 2px solid #e6e8ec;
    border-radius: 8px;
    background: #f6f7fa;
    font-size: 44px;
    line-height: 50px;
  }

  .dk i {
    margin: 0 0 6px 10px;
    border-left: 14px solid transparent;
    border-bottom: 14px solid #222;
  }

  .adjust {
    height: 52px;
    margin-left: 40px;
    padding: 0 15px;
    border-radius: 6px;
    background: #e95504;
    color: #fff;
    font-size: 41px;
    line-height: 50px;
  }

  .drawer {
    display: flex;
    align-items: center;
    justify-content: center;
    width: 53px;
    height: 72px;
    margin-right: -4px;
    border-radius: 16px 0 0 0;
    background: #999;
  }

  .panel {
    position: relative;
    margin: 0 12px;
    outline: 2px solid #e4e4e7;
  }

  .panel.flush {
    outline: 0;
    border-top: 2px solid #e4e4e7;
  }

  .panel > svg {
    display: block;
    width: 100%;
    height: auto;
  }

  .line polyline {
    fill: none;
    stroke-width: 4;
    stroke-linejoin: round;
  }

  .g {
    fill: #0a9a0f;
  }

  .y {
    fill: #ecba1c;
  }

  .p {
    fill: #7a22d6;
  }

  .k {
    fill: #222;
  }

  .axis {
    fill: #888;
    font-size: 46px;
  }

  .axis.minor {
    font-size: 39px;
  }

  .dates {
    fill: #666;
    font-size: 44px;
  }

  .limit {
    font-size: 36px;
  }

  .digit {
    font-size: 42px;
    text-anchor: middle;
  }

  .count {
    fill: #ff5a00;
  }

  .count rect {
    fill-opacity: 0.2;
  }

  .buy rect {
    fill: #e04416;
  }

  .sell rect {
    fill: #40b064;
  }

  .buy text,
  .sell text {
    fill: #fff;
  }

  .watch {
    fill: #a864e4;
    font-size: 33px;
    text-anchor: middle;
  }

  .trade text {
    fill: #fff;
    stroke: none;
    font-size: 36px;
    font-weight: 700;
    text-anchor: middle;
  }

  .trade rect {
    stroke: #d8e6ff;
    stroke-width: 2;
  }

  .trade path {
    stroke-width: 4;
    stroke-dasharray: 8 4;
  }

  .S {
    fill: #62a0fa;
    stroke: #5c96f4;
  }

  .B {
    fill: #fa7464;
    stroke: #ee7a6c;
  }

  .trade circle {
    stroke: none;
    opacity: 0.85;
  }

  .signal {
    fill: #c43430;
    font-size: 50px;
    font-weight: 500;
    text-anchor: middle;
  }

  .tools {
    position: absolute;
    right: 87px;
    bottom: 14px;
    left: 36px;
    display: flex;
    justify-content: space-between;
  }

  .tools button {
    width: 80px;
    height: 80px;
    border-radius: 50%;
    background: rgba(255, 110, 30, 0.1);
  }

  .tools svg {
    fill: none;
    stroke: #e2590c;
    stroke-width: 3;
  }

  .tools .off {
    background: rgba(0, 0, 0, 0.05);
  }

  .tools .off svg {
    stroke: #777;
  }

  .panel .unread {
    position: absolute;
    bottom: 13px;
  }

  .panel .mid {
    left: calc(50% - 17px);
  }

  .panel .end {
    right: 45px;
  }

  aside {
    display: flex;
    align-items: center;
    height: 105px;
    margin: 21px 21px 18px;
    padding: 0 43px 0 35px;
    border-radius: 52px;
    background: #fdede3;
    color: #dd5c14;
    font-size: 46px;
    white-space: nowrap;
  }

  aside a {
    flex: 1;
    margin-left: 62px;
  }

  aside button {
    padding-left: 20px;
    border-left: 2px solid #eeb090;
  }

  .dock {
    display: flex;
    height: 172px;
    padding-top: 2px;
    border-top: 2px solid #ddd;
    background: linear-gradient(#fff 8px, #d4d7da 8px, #d4d7da 10px, #f6f7f9 10px);
    color: #666;
    font-size: 38px;
  }

  .dock button {
    display: flex;
    flex: 234 0 0;
    flex-direction: column;
    align-items: center;
    padding-top: 18px;
    line-height: 44px;
  }

  .dock button:not(.index) svg {
    width: 76px;
    height: 70px;
    margin-bottom: 23px;
    fill: none;
    stroke: #666;
    stroke-width: 4;
    stroke-linecap: round;
    stroke-linejoin: round;
  }

  .dock .index {
    flex-grow: 322;
  }

  .index svg {
    margin-bottom: 18px;
  }

  .value {
    font-size: 44px;
    color: #d92c2c;
  }

  .sector {
    display: flex;
    gap: 28px;
    margin-top: 14px;
    padding-left: 8px;
    white-space: nowrap;
  }

  .sector b {
    font-size: 40px;
    font-weight: 400;
    color: #d92c2c;
  }

  .system {
    display: flex;
    justify-content: center;
    gap: 210px;
    padding: 44px 0 45px;
  }

  .system svg {
    width: 70px;
    height: 54px;
    fill: none;
    stroke: #888;
    stroke-width: 7;
    stroke-linecap: round;
    stroke-linejoin: round;
  }
</style>
